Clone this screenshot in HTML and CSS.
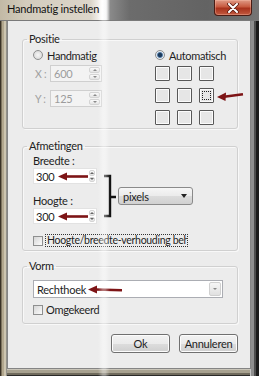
FILE: index.html
```html
<!DOCTYPE html>
<html lang="nl">

<head>
  <meta charset="UTF-8">
  <meta name="viewport" content="width=device-width, initial-scale=1.0">
  <title>Handmatig instellen</title>
  <link rel="stylesheet" href="styles.css">
</head>

<body>
  <div class="window">
    <div class="titlebar">
      <span class="title">Handmatig instellen</span>
      <button class="close" type="button">
        <svg width="12" height="10" viewBox="0 0 12 10">
          <path d="M2 1 L10 9 M10 1 L2 9" stroke="#5a1a10" stroke-width="3.6" stroke-linecap="round" />
          <path d="M2 1 L10 9 M10 1 L2 9" stroke="#ffffff" stroke-width="2" stroke-linecap="round" />
        </svg>
      </button>
    </div>

    <div class="client">
      <!-- Positie -->
      <fieldset class="group positie">
        <legend>Positie</legend>
        <div class="pos-cols">
          <div class="pos-left">
            <label class="radio"><span class="radio-dot"></span>Handmatig</label>
            <div class="coord">
              <span class="coord-label">X :</span>
              <div class="spin disabled">
                <span class="spin-value">600</span>
                <span class="spin-btns"><i class="up"></i><i class="down"></i></span>
              </div>
            </div>
            <div class="coord second">
              <span class="coord-label">Y :</span>
              <div class="spin disabled">
                <span class="spin-value">125</span>
                <span class="spin-btns"><i class="up"></i><i class="down"></i></span>
              </div>
            </div>
          </div>
          <div class="pos-right">
            <label class="radio"><span class="radio-dot checked"></span>Automatisch</label>
            <div class="anchor-wrap">
              <div class="anchor-grid">
                <span class="cell"></span><span class="cell"></span><span class="cell"></span>
                <span class="cell"></span><span class="cell"></span><span class="cell selected"></span>
                <span class="cell"></span><span class="cell"></span><span class="cell"></span>
              </div>
              <svg class="mark mark-grid" width="27" height="10" viewBox="0 0 27 10">
                <polygon points="0,6 9,1.5 8.5,10" fill="#7d1416" />
                <path d="M7 5.8 L26 3.2" stroke="#7d1416" stroke-width="2.4" />
              </svg>
            </div>
          </div>
        </div>
      </fieldset>

      <!-- Afmetingen -->
      <fieldset class="group afmetingen">
        <legend>Afmetingen</legend>
        <div class="size-row">
          <div class="size-fields">
            <span class="field-label">Breedte :</span>
            <div class="spin wide">
              <span class="spin-value">300
                <svg class="mark" width="30" height="9" viewBox="0 0 30 9">
                  <polygon points="0,4.5 9,0.5 9,8.5" fill="#7d1416" />
                  <path d="M8 4.5 H30" stroke="#7d1416" stroke-width="2.6" />
                </svg>
              </span>
              <span class="spin-btns"><i class="up"></i><i class="down"></i></span>
            </div>
            <span class="field-label second">Hoogte :</span>
            <div class="spin wide">
              <span class="spin-value">300
                <svg class="mark" width="30" height="9" viewBox="0 0 30 9">
                  <polygon points="0,4.5 9,0.5 9,8.5" fill="#7d1416" />
                  <path d="M8 4.5 H30" stroke="#7d1416" stroke-width="2.6" />
                </svg>
              </span>
              <span class="spin-btns"><i class="up"></i><i class="down"></i></span>
            </div>
          </div>
          <svg class="bracket" width="13" height="70" viewBox="0 0 13 70">
            <path d="M1 22 H7 V62 H1 M7 43 H13" fill="none" stroke="#111" stroke-width="2.4" />
          </svg>
          <div class="select-btn"><span>pixels</span><i class="caret"></i></div>
        </div>
        <label class="check ratio">
          <span class="check-box"></span>
          <span class="focus">Hoogte/breedte-verhouding behouden</span>
        </label>
      </fieldset>

      <!-- Vorm -->
      <fieldset class="group vorm">
        <legend>Vorm</legend>
        <div class="combo">
          <span class="combo-value">Rechthoek
            <svg class="mark" width="34" height="9" viewBox="0 0 34 9">
              <polygon points="0,4.5 9,0.5 9,8.5" fill="#7d1416" />
              <path d="M8 4.5 L34 5.2" stroke="#7d1416" stroke-width="2.6" />
            </svg>
          </span>
          <span class="combo-btn"><i class="caret small"></i></span>
        </div>
        <label class="check">
          <span class="check-box"></span>
          <span>Omgekeerd</span>
        </label>
      </fieldset>

      <div class="actions">
        <button class="btn" type="button">Ok</button>
        <button class="btn" type="button">Annuleren</button>
      </div>
    </div>

    <div class="glare"></div>
  </div>
</body>

</html>
```

FILE: styles.css
```css
body {
  margin: 0;
  width: 259px;
  height: 376px;
  overflow: hidden;
  font-family: Lato, 'Noto Sans', sans-serif;
  font-size: 10.5px;
  letter-spacing: -0.25px;
  color: #1e1e1e;
}

.window {
  position: relative;
  height: 376px;
  display: flex;
  flex-direction: column;
  background:
    linear-gradient(to right, #3a3226 0 1px, #7d735e 1px 2px, #b2a78e 2px 4px, #cdc5b0 4px 6px, #93918a 6px 7px) left top / 7px 100% no-repeat,
    linear-gradient(to right, #c4c4c4 0 1px, #8e8e8e 1px 4px, #4e4e4e 4px 6px, #1b1b1b 6px) right top / 9px 100% no-repeat,
    linear-gradient(to bottom, #c9c5b9 0 1px, #a7a18f 1px 4px, #6f6a5c 4px 6px, #2a2a28 6px) left bottom / 100% 7px no-repeat,
    #6a6a6a;
}

/* title bar */
.titlebar {
  height: 21px;
  flex: none;
  display: flex;
  justify-content: space-between;
  align-items: flex-start;
  background: linear-gradient(to right, #c2b9a5 0, #d3ccbd 10%, #dcd6ca 35%, #eeebe5 37.5%, #ffffff 39.5%, #f2f2f2 41%, #8a8a8a 42.5%, #6c6c6c 50%, #636363 80%, #757575 100%);
  border-bottom: 1px solid #7a7a7a;
  box-sizing: border-box;
}

.title {
  padding: 2px 0 0 7px;
  line-height: 14px;
  font-size: 11px;
  letter-spacing: -0.2px;
  color: #111;
}

.close {
  width: 38px;
  height: 16px;
  margin-right: 7px;
  padding: 0;
  border: 1px solid #4a1c14;
  border-top: none;
  border-radius: 0 0 4px 4px;
  background: linear-gradient(#e09a86, #c75a40 45%, #a8321c 55%, #c25a40);
  box-shadow: inset 0 0 0 1px rgba(255, 200, 180, 0.35);
  display: flex;
  align-items: center;
  justify-content: center;
}

/* client area */
.client {
  flex: 1;
  margin: 0 8px 7px 7px;
  border: 1px solid #858585;
  border-top: none;
  background: #ececec;
  padding: 0 12px 0 14px;
  display: flex;
  flex-direction: column;
}

.group {
  margin: 0;
  min-width: 0;
  border: 1px solid #d0d0d0;
  border-radius: 3px;
  box-shadow: inset 1px 1px 0 #f8f8f8, 1px 1px 0 #f8f8f8;
}

.group legend {
  margin-left: -6px;
  padding: 0 2px;
  line-height: 14px;
  font-size: 11px;
  color: #222;
}

.positie {
  margin-top: 11px;
  padding: 2px 10px 3px;
}

.afmetingen {
  margin-top: 10px;
  padding: 1px 10px 3px;
}

.vorm {
  margin-top: 8px;
  padding: 7px 10px 7px;
}

/* positie */
.pos-cols {
  display: grid;
  grid-template-columns: 122px 1fr;
}

.radio {
  display: flex;
  align-items: center;
  gap: 4px;
  height: 14px;
  font-size: 11px;
  letter-spacing: -0.35px;
}

.radio-dot {
  width: 10px;
  height: 10px;
  box-sizing: border-box;
  border-radius: 50%;
  border: 1px solid #8e8f8f;
  background: radial-gradient(circle at 50% 50%, #f6f6f6, #d2d2d2);
}

.radio-dot.checked {
  background: radial-gradient(circle at 50% 50%, #1d3b5c 0 1.8px, #5f86b0 2.6px, #e6edf4 3.4px, #d2d2d2);
}

.coord {
  display: flex;
  align-items: center;
  margin-top: 3px;
}

.coord.second {
  margin-top: 8px;
}

.coord-label {
  width: 17px;
  padding-left: 2px;
  box-sizing: border-box;
  color: #a0a0a0;
}

.spin {
  display: flex;
  width: 52px;
  height: 17px;
  box-sizing: border-box;
  border: 1px solid #cfcfcf;
  background: #fff;
}

.spin.disabled {
  background: #f3f3f3;
  color: #9c9c9c;
}

.spin-value {
  flex: 1;
  display: flex;
  align-items: center;
  padding-left: 2px;
  line-height: 15px;
  font-size: 11px;
}

.spin.disabled .spin-value {
  padding-left: 3px;
}

.spin-btns {
  width: 11px;
  display: flex;
  flex-direction: column;
  gap: 1px;
  padding: 1px;
}

.spin-btns i {
  flex: 1;
  border: 1px solid #d4d4d4;
  border-radius: 2px;
  background: linear-gradient(#fafafa, #e4e4e4);
  display: flex;
  align-items: center;
  justify-content: center;
}

.spin-btns i::after {
  content: "";
  border-left: 2px solid transparent;
  border-right: 2px solid transparent;
}

.spin-btns .up::after {
  border-bottom: 2px solid #8a8a8a;
}

.spin-btns .down::after {
  border-top: 2px solid #8a8a8a;
}

.anchor-wrap {
  display: flex;
  align-items: center;
  margin-top: 4px;
}

.anchor-grid {
  display: grid;
  grid-template-columns: repeat(3, 15px);
  grid-auto-rows: 15px;
  gap: 7px;
}

.cell {
  box-sizing: border-box;
  border: 1px solid #585858;
  border-radius: 1px;
  background: #e6e6e6;
  box-shadow: inset 0 0 0 1px #fbfbfb;
  display: flex;
  align-items: center;
  justify-content: center;
}

.cell.selected::after {
  content: "";
  width: 7px;
  height: 7px;
  border: 1px dotted #222;
}

.mark {
  flex: none;
}

.mark-grid {
  margin-left: 3px;
}

/* afmetingen */
.size-row {
  display: flex;
  align-items: flex-start;
}

.size-fields {
  display: flex;
  flex-direction: column;
  width: 64px;
}

.field-label {
  line-height: 14px;
  font-size: 11px;
}

.field-label.second {
  margin-top: 10px;
}

.spin.wide {
  width: 64px;
  height: 16px;
  border-color: #e2e2e2;
}

.spin.wide .spin-btns i::after {
  border-bottom-color: #666;
  border-top-color: #666;
}

.spin-value .mark {
  margin-left: 4px;
}

.bracket {
  margin-left: 6px;
  flex: none;
}

.select-btn {
  width: 75px;
  height: 18px;
  margin: 33px 0 0 2px;
  box-sizing: border-box;
  border: 1px solid #8a8a8a;
  border-radius: 3px;
  background: linear-gradient(#f6f6f6, #ebebeb 50%, #dcdcdc 51%, #d0d0d0);
  display: flex;
  align-items: center;
  justify-content: space-between;
  padding: 0 5px 0 4px;
  font-size: 11px;
}

.caret {
  border-left: 3.5px solid transparent;
  border-right: 3.5px solid transparent;
  border-top: 4px solid #222;
}

.caret.small {
  border-left-width: 2px;
  border-right-width: 2px;
  border-top: 2px solid #888;
}

.check {
  display: flex;
  align-items: center;
  gap: 3px;
  height: 13px;
  margin-top: 10px;
  font-size: 10.5px;
  letter-spacing: -0.3px;
}

.check-box {
  flex: none;
  width: 10px;
  height: 10px;
  box-sizing: border-box;
  border: 1px solid #8e8f8f;
  background: linear-gradient(135deg, #d6d6d6, #fbfbfb);
}

.focus {
  width: 141px;
  box-sizing: border-box;
  padding-left: 1px;
  white-space: nowrap;
  overflow: hidden;
  line-height: 11px;
  outline: 1px dotted #333;
}

/* vorm */
.combo {
  height: 18px;
  width: 190px;
  box-sizing: border-box;
  border: 1px solid #abadb3;
  background: #fff;
  display: flex;
  align-items: center;
  justify-content: space-between;
  padding-left: 3px;
  font-size: 11px;
}

.combo-value {
  display: flex;
  align-items: center;
}

.combo-value .mark {
  margin-left: 2px;
}

.combo-btn {
  width: 10px;
  height: 12px;
  margin-right: 1px;
  border: 1px solid #d0d0d0;
  border-radius: 2px;
  background: linear-gradient(#f6f6f6, #e0e0e0);
  display: flex;
  align-items: center;
  justify-content: center;
}

.vorm .check {
  margin-top: 5px;
  font-size: 11px;
}

/* buttons */
.actions {
  display: flex;
  justify-content: flex-end;
  gap: 9px;
  margin-top: 10px;
}

.btn {
  width: 59px;
  height: 19px;
  padding: 0;
  border: 1px solid #707070;
  border-radius: 3px;
  background: linear-gradient(#f2f2f2, #ebebeb 50%, #dddddd 51%, #cfcfcf);
  box-shadow: inset 0 0 0 1px #fcfcfc;
  font-family: inherit;
  font-size: 11px;
  letter-spacing: inherit;
  color: #1e1e1e;
}

/* light reflection over the whole window */
.glare {
  position: absolute;
  top: 0;
  bottom: 0;
  left: 98px;
  width: 12px;
  background: linear-gradient(to right, rgba(255, 255, 255, 0), rgba(255, 255, 255, 0.4) 40%, rgba(255, 255, 255, 0.4) 60%, rgba(255, 255, 255, 0));
  pointer-events: none;
}
```
